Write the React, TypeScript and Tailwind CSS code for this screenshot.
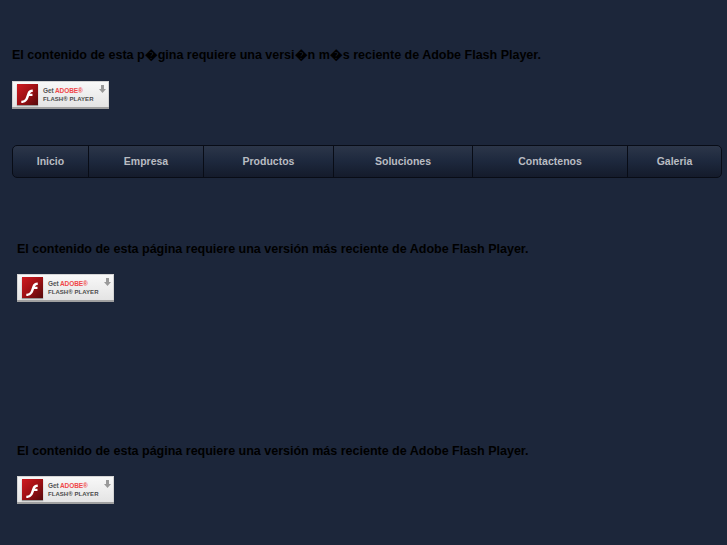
import React from 'react';

const navItems = [
  { name: 'Inicio', width: 'w-[76px]' },
  { name: 'Empresa', width: 'w-[115px]' },
  { name: 'Productos', width: 'w-[130px]' },
  { name: 'Soluciones', width: 'w-[139px]' },
  { name: 'Contactenos', width: 'w-[155px]' },
  { name: 'Galeria', width: 'flex-1' },
];

function FlashBadge() {
  return (
    <div className="flex h-[28px] w-[97px] flex-col bg-[#e6e6e6]">
      <div className="flex flex-1 items-start border-t border-l border-r border-[#d4d4d4] bg-gradient-to-b from-[#f8f8f8] to-[#e4e4e4] pt-[2px] pl-[4px]">
        <div className="h-[21px] w-[21px] shrink-0 bg-gradient-to-br from-[#cf1a20] via-[#a01014] to-[#560a0c] shadow-[0_1px_1px_#999]">
          <svg width="21" height="21" viewBox="0 0 22 22">
            <path
              d="M4.500 17.500c3 0 4.200-1.500 5.200-4.500l1.300-3.700c.9-2.300 2.300-3.600 5.500-3.600v2.600c-1.700 0-2.400.6-2.900 1.900h2.600v2.500h-3.500l-.7 1.800c-1.300 3.300-3.300 5.500-7.500 5.500z"
              fill="#fff"
            />
          </svg>
        </div>
        <div className="mt-[2px] ml-[5px] flex flex-col text-[6.5px] leading-[9px] font-bold tracking-[-0.1px] text-[#555]">
          <span>
            Get <span className="text-[#f0484a]">ADOBE®</span>
          </span>
          <span className="text-[6px] tracking-[0.05px] text-[#4a4a4a]">FLASH® PLAYER</span>
        </div>
        <svg width="7" height="8" viewBox="0 0 7 8" className="mt-[1px] ml-auto mr-[2px] shrink-0">
          <path d="M2 0h3v4h2L3.500 8 0 4h2z" fill="#999" />
        </svg>
      </div>
      <div className="h-[2px] bg-[#a0a0a0]" />
    </div>
  );
}

function FlashNotice({ text, className, gap }: { text: string; className: string; gap: string }) {
  return (
    <div className={className}>
      <p className="text-[12.5px] leading-[16px] font-bold text-black">{text}</p>
      <div className={gap}>
        <FlashBadge />
      </div>
    </div>
  );
}

export default function App() {
  return (
    <div className="h-[545px] overflow-hidden bg-[#1c263a] font-['Liberation_Sans',sans-serif]">
      <FlashNotice
        className="pt-[47px] pl-[12px]"
        gap="mt-[18px]"
        text="El contenido de esta p�gina requiere una versi�n m�s reciente de Adobe Flash Player."
      />
      <nav className="mt-[36px] ml-[12px] mr-[5px] flex h-[33px] overflow-hidden rounded-[5px] border border-[#080c16] bg-gradient-to-b from-[#2c3649] via-[#1d283d] to-[#141b2b]">
        {navItems.map((item, i) => (
          <div
            key={item.name}
            className={`${item.width} flex items-center justify-center text-[10.5px] font-bold text-[#b9bcc2] ${i < navItems.length - 1 ? 'border-r border-[#080c16]' : ''}`}
          >
            {item.name}
          </div>
        ))}
      </nav>
      <FlashNotice
        className="pt-[63px] pl-[17px]"
        gap="mt-[17px]"
        text="El contenido de esta página requiere una versión más reciente de Adobe Flash Player."
      />
      <FlashNotice
        className="pt-[141px] pl-[17px]"
        gap="mt-[17px]"
        text="El contenido de esta página requiere una versión más reciente de Adobe Flash Player."
      />
    </div>
  );
}
